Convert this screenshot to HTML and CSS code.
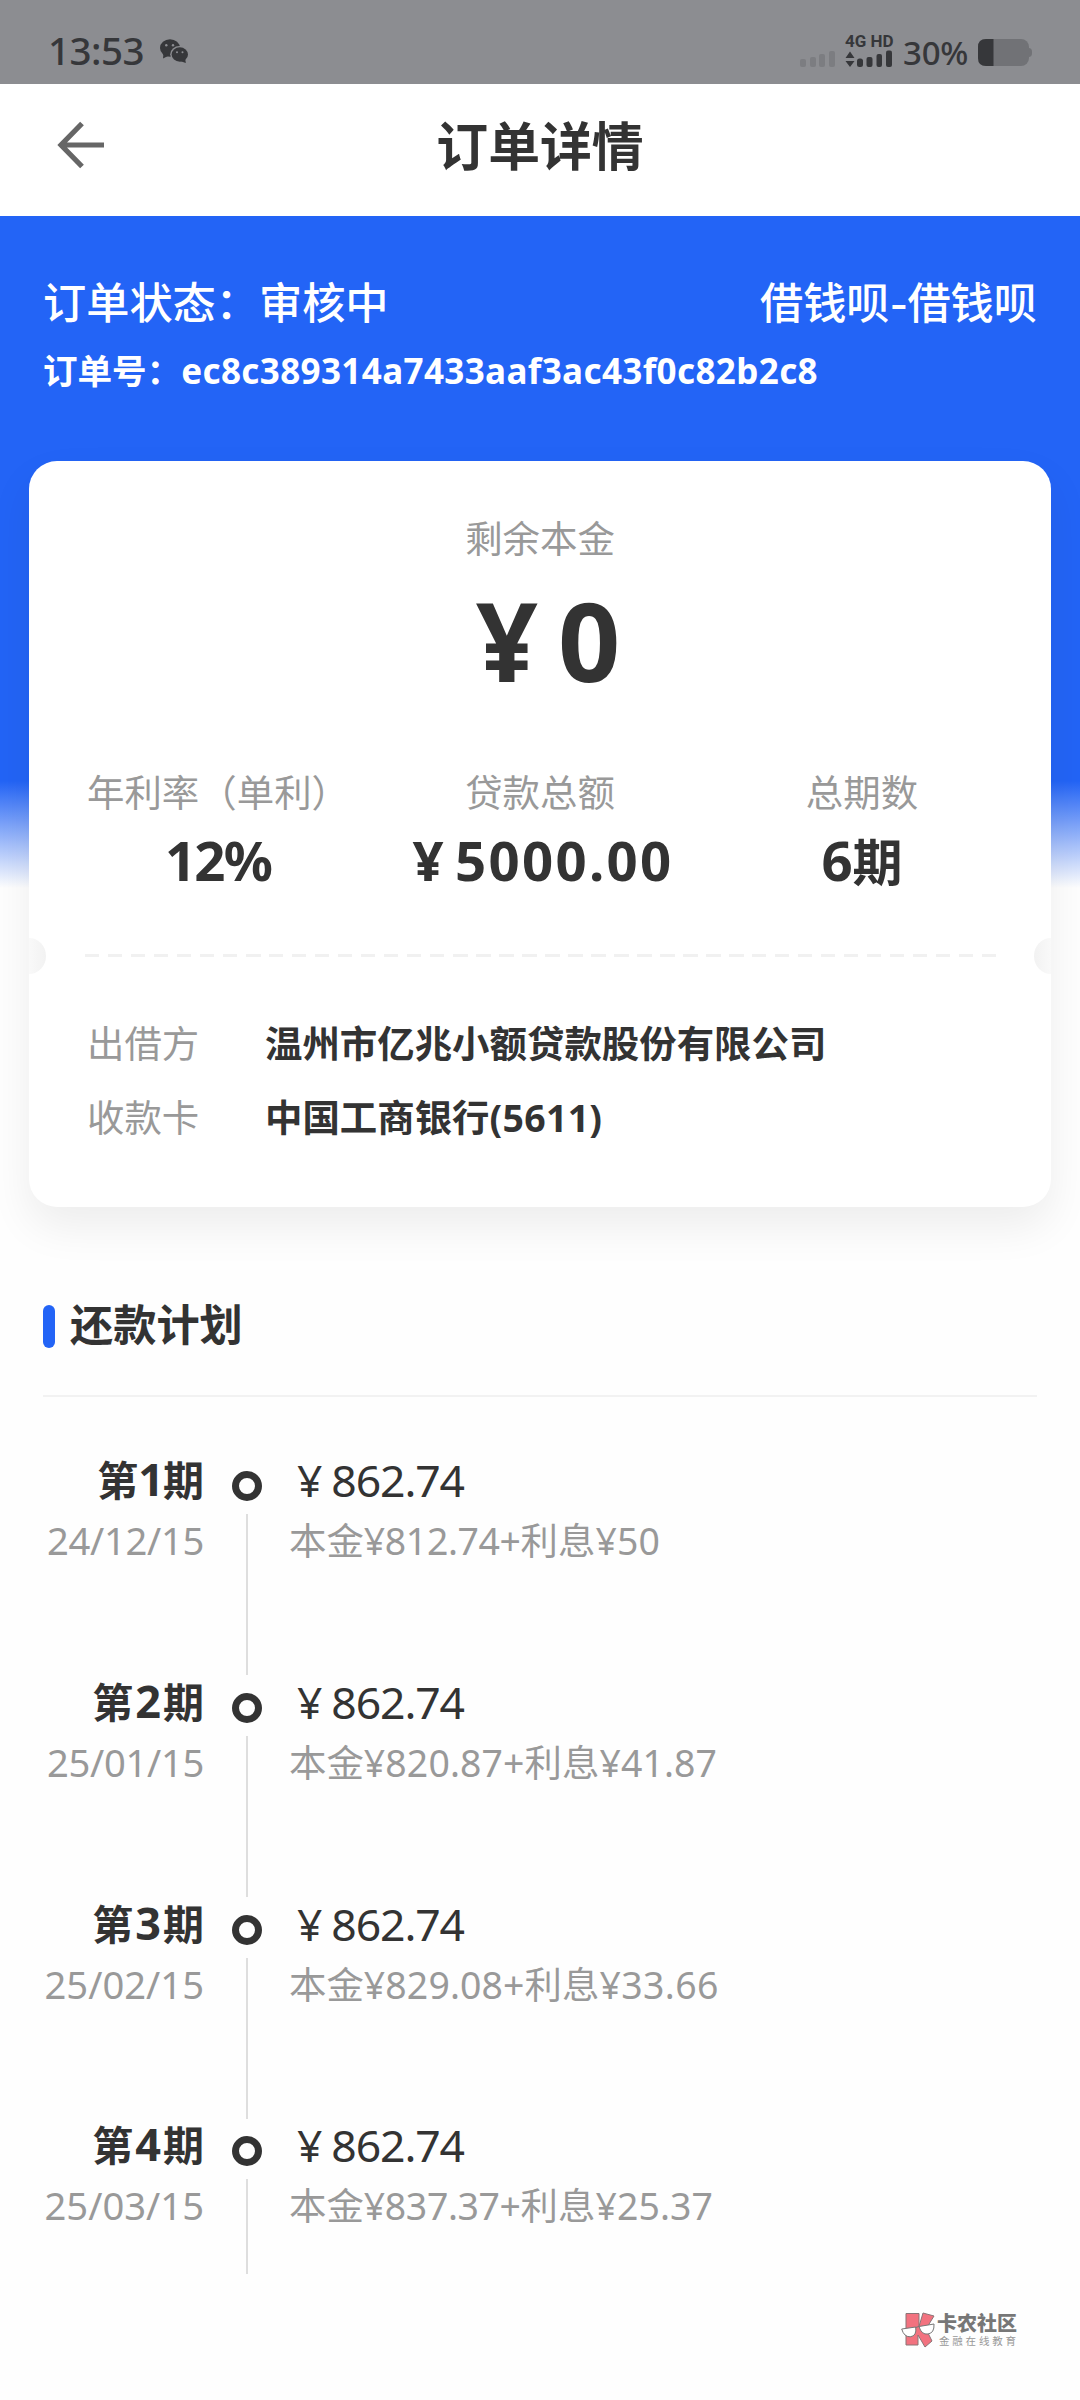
FILE: index.html
```html
<!DOCTYPE html>
<html lang="zh-CN">
<head>
<meta charset="utf-8">
<title>订单详情</title>
<link rel="stylesheet" href="styles.css">
</head>
<body>
<div class="status-bar">
  <span class="clock">13:53</span>
  <svg class="wechat" viewBox="0 0 28 24" width="28" height="24">
    <ellipse cx="10" cy="9" rx="10" ry="8.800" fill="#36373a"/>
    <path fill="#36373a" d="M3.500 14L3 19.500l6-3z"/>
    <ellipse cx="19.500" cy="15.300" rx="9.300" ry="8.200" fill="#8c8d91"/>
    <ellipse cx="19.800" cy="15.500" rx="8.200" ry="7.200" fill="#36373a"/>
    <path fill="#36373a" d="M20 22l5.800 2-.6-4.500z"/>
    <g fill="#8c8d91"><circle cx="6.300" cy="6.300" r="1.200"/><circle cx="13" cy="6.300" r="1.200"/><circle cx="17" cy="13.200" r="1"/><circle cx="22.500" cy="13.200" r="1"/></g>
  </svg>
  <svg class="signals" viewBox="0 0 94 40" width="94" height="40">
    <g fill="#7c7d81"><rect x="0" y="29" width="6" height="8" rx="2"/><rect x="10" y="27" width="6" height="10" rx="2"/><rect x="19" y="24" width="6" height="13" rx="2"/><rect x="29" y="21" width="6" height="16" rx="2"/></g>
    <g fill="#36373a"><path d="M50 21.500l4.500 6.500h-9zM50 37l-4.500-6h9z"/><rect x="57" y="28.500" width="6" height="8.500" rx="2.500"/><rect x="66.500" y="27" width="6" height="10" rx="2"/><rect x="76.500" y="24" width="5.500" height="13" rx="2"/><rect x="86" y="20.500" width="6" height="16.500" rx="2"/></g>
    <text class="net" x="45" y="16.500">4G HD</text>
  </svg>
  <span class="charge">30%</span>
  <svg class="battery" viewBox="0 0 54 28" width="54" height="28">
    <rect x="0" y="0" width="51" height="27" rx="8" fill="#717276"/><path d="M50 9c3 0 4 1 4 4.500S53 18 50 18z" fill="#717276"/>
    <path d="M15.500 0H8Q0 0 0 8v11q0 8 8 8h7.500z" fill="#36373a"/>
  </svg>
</div>
<header class="nav">
  <svg class="back" viewBox="0 0 48 48" width="48" height="48"><path d="M25 2.500L4 24l21 21.500M5 24h42" fill="none" stroke="#666" stroke-width="5.200"/></svg>
  <h1>订单详情</h1>
</header>
<main>
  <section class="hero">
    <div class="order-row"><span>订单状态：审核中</span><span>借钱呗<span class="dash">-</span>借钱呗</span></div>
    <div class="order-no"><span>订单号：</span><span class="hash">ec8c389314a7433aaf3ac43f0c82b2c8</span></div>
    <div class="card">
      <p class="label">剩余本金</p>
      <p class="principal"><span>¥</span><span>0</span></p>
      <div class="stats">
        <div class="stat rate"><p class="label">年利率（单利）</p><p class="value">12%</p></div>
        <div class="stat total"><p class="label">贷款总额</p><p class="value"><span class="yen">¥</span>5000.00</p></div>
        <div class="stat count"><p class="label">总期数</p><p class="value">6<span class="cjk">期</span></p></div>
      </div>
      <div class="tear"></div>
      <dl class="info">
        <dt>出借方</dt><dd>温州市亿兆小额贷款股份有限公司</dd>
        <dt>收款卡</dt><dd>中国工商银行<span class="tail">(5611)</span></dd>
      </dl>
    </div>
  </section>
  <section class="plan">
    <h2>还款计划</h2>
    <ol>
      <li><div class="when"><b>第<i class="one">1</i>期</b><time class="narrow">24/12/15</time></div><div class="rail"></div><div class="what"><p class="sum"><span>¥</span>862.74</p><p class="split">本金<i class="tight">¥812.74+</i>利息<i>¥50</i></p></div></li>
      <li><div class="when"><b>第<i>2</i>期</b><time class="narrow">25/01/15</time></div><div class="rail"></div><div class="what"><p class="sum"><span>¥</span>862.74</p><p class="split">本金<i>¥820.87+</i>利息<i>¥41.87</i></p></div></li>
      <li><div class="when"><b>第<i>3</i>期</b><time>25/02/15</time></div><div class="rail"></div><div class="what"><p class="sum"><span>¥</span>862.74</p><p class="split">本金<i>¥829.08+</i>利息<i class="loose">¥33.66</i></p></div></li>
      <li><div class="when"><b>第<i>4</i>期</b><time>25/03/15</time></div><div class="rail"></div><div class="what"><p class="sum"><span>¥</span>862.74</p><p class="split">本金<i class="tight">¥837.37+</i>利息<i>¥25.37</i></p></div></li>
    </ol>
  </section>
</main>
<aside class="brand">
  <svg viewBox="0 0 34 36" width="34" height="36">
    <g fill="#f2727f" stroke="#8a7477" stroke-width="1"><path d="M5 1.500h13v13l4-13.500 11 3-8 13 6 12-7 6-7-12v10H5z"/></g>
    <g fill="#fff" stroke="#777" stroke-width="1"><path d="M.7 17l14-2q1.300 9-5.500 9.800Q3 25 .7 17z"/><path d="M18 14.500l15-2.500q.5 9-6 10t-9-7.500zM14.500 15.500l3.500-1"/></g>
  </svg>
  <div><strong>卡农社区</strong><small>金融在线教育</small></div>
</aside>
</body>
</html>
```
FILE: styles.css
```css
*, *::before, *::after { box-sizing: border-box; margin: 0; padding: 0; }
body {
  width: 1080px; height: 2400px; overflow: hidden; position: relative;
  background: #fefefe; color: #333;
  font-family: "Noto Sans", "Noto Sans CJK SC", sans-serif;
}
i { font-style: normal; }
.status-bar { height: 84px; background: #8c8d91; color: #36373a; display: flex; align-items: flex-start; padding: 0 48px; }
.clock { font-size: 38.500px; font-weight: 500; line-height: 54px; padding-top: 23px; width: 112px; letter-spacing: -.5px; }
.wechat { margin-top: 39px; }
.signals { margin: 30px 9px 0 auto; }
.net { font: bold 17px "Roboto", sans-serif; fill: #36373a; }
.charge { font-size: 33px; font-weight: 500; line-height: 46px; padding-top: 30px; width: 75px; letter-spacing: -.2px; }
.battery { margin-top: 39px; }
.nav { height: 132px; background: #fff; display: grid; grid-template-columns: 200px 1fr 200px; align-items: center; }
.back { margin-left: 57px; margin-top: -11px; }
.nav h1 { font-size: 51.840px; line-height: 76px; text-align: center; margin-top: -9px; }
.hero {
  height: 1045px; padding: 53px 29px 0;
  background: linear-gradient(#2364f6 0, #2364f6 565px, #fefefe 672px);
}
.order-row { display: flex; justify-content: space-between; padding: 0 14px; color: #fff; font-size: 43.200px; font-weight: 500; line-height: 68px; }
.dash { display: inline-block; transform: scaleX(1.2); margin: 0 2px; }
.order-no { display: flex; padding: 0 14px; color: #fff; font-size: 34.560px; font-weight: 700; line-height: 68px; }
.hash { font-size: 35px; letter-spacing: .38px; }
.card {
  position: relative; margin-top: 56px; height: 746px; border-radius: 28px; background: #fff;
  box-shadow: 0 20px 44px rgba(0,0,0,.07); padding-top: 50px; text-align: center;
}
.card::before, .card::after {
  content: ""; position: absolute; top: 477px; width: 17px; height: 36px;
}
.card::before { left: 0; border-radius: 0 17px 17px 0 / 0 18px 18px 0; background: linear-gradient(90deg, #f9f9f9, #f2f2f2); }
.card::after { right: 0; border-radius: 17px 0 0 17px / 18px 0 0 18px; background: linear-gradient(270deg, #f9f9f9, #f2f2f2); }
.label { font-size: 37.440px; line-height: 56px; color: #999; }
.principal { display: flex; justify-content: center; gap: 20px; font-size: 109px; line-height: 140px; font-weight: 700; margin-top: 3px; padding-left: 16px; }
.stats { display: flex; margin-top: 55px; }
.stat { white-space: nowrap; }
.rate { width: 378px; }
.rate .value { letter-spacing: -1.800px; }
.total { width: 266px; display: flex; flex-direction: column; align-items: center; }
.total .value { letter-spacing: 2.300px; padding-left: 6px; }
.count { width: 378px; }
.value { font-size: 54.500px; line-height: 80px; font-weight: 700; margin-top: -1px; }
.yen { margin-right: 9px; }
.cjk { font-size: 50px; }
.tear { height: 3px; margin: 52px 55px 0 56px; background: repeating-linear-gradient(90deg, #f1f1f1 0 14.500px, transparent 14.500px 23px); }
.info { display: grid; grid-template-columns: 178px 1fr; margin: 50px 0 0 58px; text-align: left; font-size: 37.440px; line-height: 74px; }
.info dt { color: #999; }
.info dd { font-weight: 700; }
.tail { letter-spacing: .3px; }
.plan { padding: 0 43px; }
.plan h2 { height: 136px; border-bottom: 2px solid #f2f2f2; font-size: 43.200px; line-height: 56px; padding-top: 36px; display: flex; gap: 15px; }
.plan h2::before { content: ""; width: 12px; height: 43px; border-radius: 6px; background: #2364f6; margin-top: 8px; }
.plan ol { list-style: none; padding-top: 52px; height: 877px; overflow: hidden; }
.plan li { display: grid; grid-template-columns: 161px 87px 1fr; height: 221.800px; }
.when { text-align: right; white-space: nowrap; }
.when b { display: block; font-size: 41px; line-height: 60px; }
.when b i { font-size: 45px; margin: 0 2px; }
.when b .one { margin: 0 -1px 0 0; }
.when time { display: block; font-size: 38.200px; line-height: 60px; color: #999; }
.when .narrow { letter-spacing: -.3px; }
.rail { display: flex; flex-direction: column; align-items: center; gap: 13px; padding: 22px 1px 0 0; }
.rail::before { content: ""; width: 30px; height: 30px; flex: none; border: 7px solid #333; border-radius: 50%; }
.rail::after { content: ""; width: 2px; height: 161px; background: #dedede; }
.what { white-space: nowrap; padding-top: 1px; }
.sum { font-size: 44.500px; line-height: 60px; padding-left: 6px; letter-spacing: -1.100px; }
.sum span { margin-right: 10px; }
.split { font-size: 37.440px; line-height: 62px; color: #999; margin-left: -2px; }
.split i { letter-spacing: .1px; }
.split .tight { letter-spacing: -.4px; }
.split .loose { letter-spacing: .4px; }
.brand { position: absolute; left: 901px; top: 2312px; display: flex; gap: 2px; }
.brand div { display: flex; flex-direction: column; }
.brand strong { font-size: 20px; line-height: 24px; letter-spacing: 0; color: #777; font-weight: 900; }
.brand small { font-size: 10.500px; line-height: 10px; letter-spacing: 2.800px; margin-left: 2px; color: #999; }
```
